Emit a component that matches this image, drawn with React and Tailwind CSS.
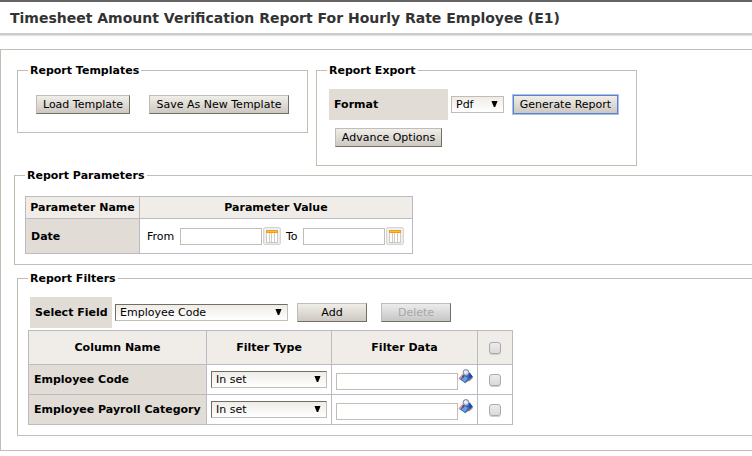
import React, { useState } from 'react';

const buttonBase =
  'h-[19px] border border-t-[#c1bdb5] border-l-[#c1bdb5] border-r-[#716f64] border-b-[#716f64] bg-gradient-to-b text-center whitespace-nowrap';

const Button = ({ className = '', disabled, ...props }) => (
  <button
    type="button"
    disabled={disabled}
    className={`${buttonBase} ${
      disabled ? 'from-[#ececec] to-[#c6c6c6] text-[#a8a8a8]' : 'from-[#f0eeea] to-[#cdc8c0] text-black'
    } ${className}`}
    {...props}
  />
);

const Select = ({ className = '', tone = '', options, ...props }) => (
  <span className={`relative inline-block h-[17px] ${className}`}>
    <select
      className={`block h-full w-full appearance-none border bg-gradient-to-b from-[#efece7] to-white pl-1 leading-[15px] ${
        tone || 'border-t-[#716f64] border-l-[#716f64] border-r-[#c1bdb5] border-b-[#c1bdb5]'
      }`}
      {...props}
    >
      {options.map((option) => (
        <option key={option}>{option}</option>
      ))}
    </select>
    <svg className="pointer-events-none absolute top-[5px] right-[6px]" width="7" height="6" viewBox="0 0 7 6">
      <path d="M0.5 0h6L4.2 6h-1.400z" fill="#000" />
    </svg>
  </span>
);

const Panel = ({ title, className = '', children }) => (
  <fieldset className={`min-w-0 border border-[#c1bdb5] px-[10px] ${className}`}>
    <legend className="px-[2px] font-bold leading-[13px]">{title}</legend>
    {children}
  </fieldset>
);

const TextBox = ({ className = '', ...props }) => (
  <input type="text" className={`h-[17px] border border-[#c1bdb5] bg-white px-1 ${className}`} {...props} />
);

const Checkbox = (props) => (
  <input
    type="checkbox"
    className="mx-auto block size-3 appearance-none rounded-[3px] border border-[#a9a9a9] bg-gradient-to-b from-[#ececec] to-[#dadada] shadow-[0_1px_0_#cfcfcf] checked:bg-[#7f9db9]"
    {...props}
  />
);

const CalendarButton = ({ label }) => (
  <button type="button" aria-label={label} className="block size-[18px] shrink-0">
    <svg width="18" height="18" viewBox="0 0 18 18">
      <rect x="0.5" y="0.5" width="17" height="17" rx="1.5" fill="#e6ebf3" stroke="#d9d5ce" />
      <rect x="2" y="2" width="14" height="14" fill="#f3f2ef" />
      <rect x="3" y="6" width="12" height="9" fill="#fff" />
      <path d="M3.5 6v9M6.5 6v9M8.5 6v9M11.5 6v9M14.5 6v9" stroke="#cfccc6" />
      <path d="M3 15.5h12" stroke="#c9c6c0" />
      <rect x="3" y="3" width="12" height="3" fill="#ee9d14" />
      <rect x="4" y="4" width="10" height="1" fill="#f9c040" />
    </svg>
  </button>
);

const LookupButton = ({ label }) => (
  <button type="button" aria-label={label} className="block size-[15px] shrink-0">
    <svg width="15" height="15" viewBox="0 0 15 15">
      <path d="M0.5 9.500L4.500 5l2 2-4.500 4z" fill="#d97b62" />
      <path d="M1.500 10.500L5 6.500" stroke="#f6e4df" strokeWidth="0.8" />
      <path d="M7 14.500L14.500 8.500v-1.500L6 12.500z" fill="#7fb85c" />
      <path d="M10 12l4.500-3.500v1l-3.500 3z" fill="#e0624a" />
      <path d="M2 10.500L6 5.500l5.500-2 3.500 4.500-8 6z" fill="#2f66be" />
      <path d="M3.500 10.500L6.500 7l3.500 2-3 4z" fill="#6f9fe0" />
      <path d="M10.500 4.500l1.500-0.500L14.500 7.500l-3 2z" fill="#1d4da6" />
      <path d="M6.500 6L4.500 8.500" stroke="#3f4a78" strokeWidth="1.300" />
      <circle cx="8" cy="3.500" r="2.900" fill="#d3d9eb" stroke="#7a80a6" />
      <circle cx="7.500" cy="3" r="1.200" fill="#f5f7fc" />
    </svg>
  </button>
);

const filters = ['Employee Code', 'Employee Payroll Category'];
const cell = 'border border-[#bdbac4]';

const App = () => {
  const [selected, setSelected] = useState([]);
  const allSelected = selected.length === filters.length;

  const toggle = (name) =>
    setSelected((prev) => (prev.includes(name) ? prev.filter((n) => n !== name) : [...prev, name]));

  return (
    <div className="bg-white font-['Verdana','DejaVu_Sans',sans-serif] text-[11px] leading-[13px] text-black">
      <div className="h-[2px] bg-[#666364]" />
      <header className="border-b-2 border-[#cccccc] px-[10px] pt-2 pb-[7px] shadow-[0_1px_1px_#e4e4e4]">
        <h1 className="text-[14px] font-bold leading-4 whitespace-nowrap text-[#333333]">
          Timesheet Amount Verification Report For Hourly Rate Employee (E1)
        </h1>
      </header>

      <main className="mt-[14px] border border-r-0 border-[#c1bdb5] pt-[14px] pb-[14px] pl-[13px]">
        <div className="flex items-start gap-2 pl-[3px]">
          <Panel title="Report Templates">
            <div className="flex gap-[19px] py-[18px] pr-2 pl-2">
              <Button className="w-[94px]">Load Template</Button>
              <Button className="w-[140px]">Save As New Template</Button>
            </div>
          </Panel>

          <Panel title="Report Export">
            <div className="pt-3 pr-2 pb-[18px] pl-[2px]">
              <div className="flex items-center">
                <label htmlFor="format" className="w-[119px] bg-[#e1dcd5] px-[5px] py-[9px] font-bold">
                  Format
                </label>
                <Select
                  id="format"
                  className="ml-[3px] w-[53px]"
                  tone="border-[#c1bdb5]"
                  options={['Pdf', 'Excel']}
                />
                <Button className="ml-[9px] w-[105px] border-[#5b83c4]! shadow-[0_0_0_1px_#a5c2f3]">
                  Generate Report
                </Button>
              </div>
              <Button className="mt-2 ml-[6px] block w-[107px]">Advance Options</Button>
            </div>
          </Panel>
        </div>

        <Panel title="Report Parameters" className="mt-[3px] border-r-0">
          <table className="mt-[14px] mb-[10px] border-collapse">
            <thead>
              <tr className="h-[22px] bg-[#f0ede8]">
                <th className={`${cell} w-[114px] px-1`}>Parameter Name</th>
                <th className={cell}>Parameter Value</th>
              </tr>
            </thead>
            <tbody>
              <tr className="h-[35px]">
                <th className={`${cell} bg-[#e1dcd5] px-[5px] text-left`}>Date</th>
                <td className={`${cell} pr-2 pl-[7px]`}>
                  <div className="flex items-center">
                    <label htmlFor="date-from" className="w-[33px]">
                      From
                    </label>
                    <TextBox id="date-from" className="mr-px w-[82px]" />
                    <CalendarButton label="Pick from date" />
                    <label htmlFor="date-to" className="ml-[5px] w-[17px]">
                      To
                    </label>
                    <TextBox id="date-to" className="mr-px w-[82px]" />
                    <CalendarButton label="Pick to date" />
                  </div>
                </td>
              </tr>
            </tbody>
          </table>
        </Panel>

        <Panel title="Report Filters" className="mt-[7px] ml-[3px] border-r-0">
          <div className="flex items-center pt-3 pl-[2px]">
            <label
              htmlFor="select-field"
              className="w-[82px] bg-[#e1dcd5] px-[5px] py-[9px] font-bold whitespace-nowrap"
            >
              Select Field
            </label>
            <Select id="select-field" className="ml-[3px] w-[173px]" options={filters} />
            <Button className="ml-[9px] w-[70px]">Add</Button>
            <Button className="ml-[14px] w-[70px]" disabled={selected.length === 0}>
              Delete
            </Button>
          </div>

          <table className="mt-[2px] mb-[10px] border-collapse">
            <thead>
              <tr className="h-[34px] bg-[#f0ede8]">
                <th className={`${cell} w-[178px]`}>Column Name</th>
                <th className={`${cell} w-[125px]`}>Filter Type</th>
                <th className={`${cell} w-[146px]`}>Filter Data</th>
                <th className={`${cell} w-[35px]`}>
                  <Checkbox
                    aria-label="Select all filters"
                    checked={allSelected}
                    onChange={() => setSelected(allSelected ? [] : filters)}
                  />
                </th>
              </tr>
            </thead>
            <tbody>
              {filters.map((name) => (
                <tr key={name} className="h-[30px]">
                  <th className={`${cell} bg-[#e1dcd5] px-[5px] text-left whitespace-nowrap`}>{name}</th>
                  <td className={`${cell} px-1`}>
                    <Select
                      className="block w-[116px]"
                      aria-label={`${name} filter type`}
                      options={['In set', 'Not in set']}
                    />
                  </td>
                  <td className={`${cell} px-1`}>
                    <div className="flex h-[21px] items-start">
                      <TextBox className="w-[122px] self-end" aria-label={`${name} filter data`} />
                      <LookupButton label={`Look up ${name}`} />
                    </div>
                  </td>
                  <td className={cell}>
                    <Checkbox
                      aria-label={`Select ${name}`}
                      checked={selected.includes(name)}
                      onChange={() => toggle(name)}
                    />
                  </td>
                </tr>
              ))}
            </tbody>
          </table>
        </Panel>
      </main>
    </div>
  );
};

export default App;
